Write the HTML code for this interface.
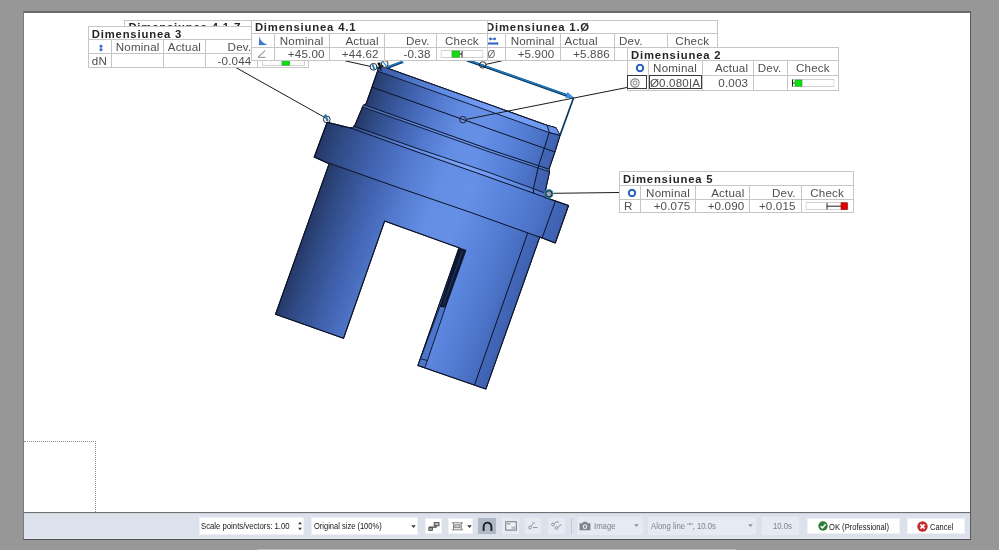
<!DOCTYPE html>
<html><head><meta charset="utf-8"><title>Report</title>
<style>
html,body{margin:0;padding:0}
body{width:999px;height:550px;overflow:hidden;background:#979797;position:relative;font-family:"Liberation Sans",sans-serif}
#win{position:absolute;left:23px;top:11px;width:946px;height:526px;background:#fff;border:1px solid #5a5a5a;border-top:2px solid #6b6b6b;border-left-color:#7b7b7b;border-bottom-color:#505050;box-sizing:content-box}
#page{position:absolute;left:0;top:0;width:999px;height:550px;will-change:transform}
.lbl{position:absolute;background:#fff;font-size:11.6px;letter-spacing:.18px;color:#4e4e4e}
.lbl::before{content:'';position:absolute;left:0;top:0;right:0;bottom:0;border-left:1px solid #c6c6c6;border-top:1px solid #c6c6c6}
.cell{position:absolute;box-sizing:border-box;border-right:1px solid #c6c6c6;border-bottom:1px solid #c6c6c6;white-space:nowrap}
.cell .t{position:absolute;top:50%;transform:translateY(-50%);line-height:12px;margin-top:calc(.5px + var(--dy,0px))}
.cell .t.c{left:50%;transform:translate(-50%,-50%)}
.cell .t.b{font-weight:bold;font-size:11.3px;letter-spacing:.82px;color:#262626;margin-top:1.5px}
.ic{display:block}
.sym{font-size:10.5px;color:#6a6a6a;letter-spacing:0}
.bx{position:absolute;border:1.8px solid #3a3a3a;box-sizing:border-box}
#dot{position:absolute;left:24px;top:441px;width:72px;height:71px;border-top:1px dotted #8c8c8c;border-right:1px dotted #8c8c8c;box-sizing:border-box}
#tb{position:absolute;left:24px;top:512px;width:946px;height:27px;background:linear-gradient(#c9ced8 0,#dce1ec 1.5px,#dce1ec 24px,#e6eaf3 26px);border-top:1px solid #707070;box-sizing:border-box;font-size:9px;color:#161616}
#tb .w{position:absolute;top:4px;height:17px;background:#fff;box-sizing:border-box;border:1px solid #eef1f6}
#tb .d{position:absolute;top:4px;height:17px;background:#e6eaf2;box-sizing:border-box;color:#7d828b}
#tb .s{position:absolute;display:inline-block;transform:scaleX(.86);transform-origin:0 50%;white-space:nowrap;top:3.9px;line-height:10px}
#tb .d .s{top:4.8px}
#strip{position:absolute;left:257px;top:549px;width:479px;height:1px;background:#b9bcc2}
</style></head><body>
<div id="win"></div>
<div id="page">
<svg id="part" width="999" height="550" viewBox="0 0 999 550" style="position:absolute;left:0;top:0">
<defs>
<linearGradient id="g" gradientUnits="userSpaceOnUse" x1="327.8" y1="116.6" x2="569.0" y2="202.3">
<stop offset="0.000" stop-color="#253866"/>
<stop offset="0.080" stop-color="#2f4a84"/>
<stop offset="0.225" stop-color="#4163b0"/>
<stop offset="0.365" stop-color="#547bd0"/>
<stop offset="0.500" stop-color="#648ee4"/>
<stop offset="0.625" stop-color="#668fe6"/>
<stop offset="0.750" stop-color="#5a84dc"/>
<stop offset="0.880" stop-color="#4d75ca"/>
<stop offset="0.950" stop-color="#456abc"/>
<stop offset="1.000" stop-color="#4163b2"/>
</linearGradient>
<linearGradient id="gu" gradientUnits="userSpaceOnUse" x1="355.1" y1="126.3" x2="541.6" y2="192.6">
<stop offset="0.000" stop-color="#253866"/>
<stop offset="0.080" stop-color="#2f4a84"/>
<stop offset="0.225" stop-color="#4163b0"/>
<stop offset="0.365" stop-color="#547bd0"/>
<stop offset="0.500" stop-color="#648ee4"/>
<stop offset="0.625" stop-color="#668fe6"/>
<stop offset="0.750" stop-color="#5a84dc"/>
<stop offset="0.880" stop-color="#4d75ca"/>
<stop offset="0.950" stop-color="#456abc"/>
<stop offset="1.000" stop-color="#4163b2"/>
</linearGradient>
<linearGradient id="gl" gradientUnits="userSpaceOnUse" x1="342.9" y1="121.9" x2="553.9" y2="197.0">
<stop offset="0.000" stop-color="#253866"/>
<stop offset="0.080" stop-color="#2f4a84"/>
<stop offset="0.225" stop-color="#4163b0"/>
<stop offset="0.365" stop-color="#547bd0"/>
<stop offset="0.500" stop-color="#648ee4"/>
<stop offset="0.625" stop-color="#668fe6"/>
<stop offset="0.750" stop-color="#5a84dc"/>
<stop offset="0.880" stop-color="#4d75ca"/>
<stop offset="0.950" stop-color="#456abc"/>
<stop offset="1.000" stop-color="#4163b2"/>
</linearGradient>
<linearGradient id="gf" gradientUnits="userSpaceOnUse" x1="350" y1="127" x2="545" y2="195">
<stop offset="0" stop-color="#5a86e4" stop-opacity="0.25"/>
<stop offset="0.3" stop-color="#6c98f4" stop-opacity="0.6"/>
<stop offset="0.6" stop-color="#80aaff" stop-opacity="0.85"/>
<stop offset="0.85" stop-color="#6c98f4" stop-opacity="0.6"/>
<stop offset="1" stop-color="#5f8ae8" stop-opacity="0.5"/>
</linearGradient>
<linearGradient id="gt" gradientUnits="userSpaceOnUse" x1="378" y1="69" x2="556" y2="128">
<stop offset="0" stop-color="#3a5aa2"/>
<stop offset="0.35" stop-color="#5f8ae4"/>
<stop offset="0.7" stop-color="#79a4fb"/>
<stop offset="1" stop-color="#6a94ee"/>
</linearGradient>
</defs>
<!-- body silhouette -->
<path id="body" fill="url(#g)" stroke="#0b1226" stroke-width="1.1" stroke-linejoin="round" d="
M377.6 71.2 Q378.6 65.6 384.5 67.2 L547.4 125.5 L555.9 127.9 L560 135.4 L555.3 150.5 L548.9 169.2 L549.5 171.6 L544.7 193.8 L545.3 197.4
L568.5 205.6 L555.3 242.9 L539.7 237.1 L485.9 388.9 L418 365.4 L459.1 247.8 L384.6 221 L343.5 338.3 L275.6 314.2
L329.2 163.7 L314.2 157.1 L327.2 122.2 L349.5 127.7 Q353.6 128.6 355.2 124.6 L363.2 105.6 L366.2 103.6 L372 87.2 Z"/>
<clipPath id="cb"><path d="M377.6 71.2 Q378.6 65.6 384.5 67.2 L547.4 125.5 L555.9 127.9 L560 135.4 L555.3 150.5 L548.9 169.2 L549.5 171.6 L544.7 193.8 L545.3 197.4 L568.5 205.6 L555.3 242.9 L539.7 237.1 L485.9 388.9 L418 365.4 L459.1 247.8 L384.6 221 L343.5 338.3 L275.6 314.2 L329.2 163.7 L314.2 157.1 L327.2 122.2 L349.5 127.7 Q353.6 128.6 355.2 124.6 L363.2 105.6 L366.2 103.6 L372 87.2 Z"/></clipPath>
<g clip-path="url(#cb)">
<path fill="url(#gu)" d="M340 128 L350.2 127.8 L545.3 197.4 L580 209.7 L580 50 L340 50 Z"/>
<path fill="url(#gl)" d="M250 135 L329.2 163.2 L542.1 238 L575 249.6 L575 400 L250 400 Z"/>
</g>
<path fill="none" stroke="#0b1226" stroke-width="1.1" stroke-linejoin="round" d="M377.6 71.2 Q378.6 65.6 384.5 67.2 L547.4 125.5 L555.9 127.9 L560 135.4 L555.3 150.5 L548.9 169.2 L549.5 171.6 L544.7 193.8 L545.3 197.4 L568.5 205.6 L555.3 242.9 L539.7 237.1 L485.9 388.9 L418 365.4 L459.1 247.8 L384.6 221 L343.5 338.3 L275.6 314.2 L329.2 163.7 L314.2 157.1 L327.2 122.2 L349.5 127.7 Q353.6 128.6 355.2 124.6 L363.2 105.6 L366.2 103.6 L372 87.2 Z"/>

<!-- top face light strip -->
<path fill="url(#gt)" stroke="#0b1226" stroke-width="0.9" stroke-linejoin="round" d="M377.6 71.2 Q378.6 65.6 384.5 67.2 L547.4 125.5 L555.9 127.9 L560 135.4 L549.2 132.6 Z"/>
<!-- right end faces (slightly darker) -->
<path fill="#3b5aa6" fill-opacity="0.22" d="M547.4 125.8 L555.9 127.9 L560 135.4 L555.3 150.5 L548.9 169.2 L549.5 171.6 L544.7 193.8 L533.8 193.2 L533.2 189.6 L538.6 165.6 L544.4 148 L549.2 132.4 Z"/>
<path fill="#6f9af4" fill-opacity="0.55" d="M547.4 125.8 L555.9 127.9 L560 135.4 L549.2 132.4 Z"/>
<path fill="#34509a" fill-opacity="0.12" d="M555.3 201.4 L568.5 205.6 L555.3 242.9 L542.1 238 Z"/>
<path fill="#34509a" fill-opacity="0.1" d="M527.7 233 L539.7 237.1 L485.9 388.9 L474.5 384.9 Z"/>
<!-- fillet light strip between cylinder and flange -->
<path fill="url(#gf)" d="M353 126.5 Q420 150.5 490 173.2 L544 192.8 L545 197 L490 177.4 Q420 153 350.5 128 Z"/>
<path fill="#6c98f2" fill-opacity="0.45" d="M363.6 104.6 L490 149.6 L548.9 169.2 L549.5 171.7 L490 152.1 L362.6 107 Z"/>
<g fill="none" stroke="#0b1226" stroke-width="1">
<!-- L2 -->
<path d="M372 87.2 L500 132.6 L554.4 151.8"/>
<!-- groove double line -->
<path d="M363.6 104.6 L490 149.6 L548.9 169.2"/>
<path d="M362.6 107 L490 152.1 L549.5 171.7" stroke-width="0.9"/>
<!-- fillet lines -->
<path d="M353.5 126 Q420 150 490 172.8 L544 192.6" stroke-width="0.9"/>
<path d="M350 127.8 Q420 153.2 490 177.6 L545.3 197.4"/>
<!-- flange bottom -->
<path d="M329.2 163.2 Q400 188.5 470 212.2 L542.1 238"/>
<!-- right end face edges -->
<path d="M547.4 125.8 L549.2 132.4 L544.4 148 L538.6 165.6 L533.2 189.6 L533.8 193.2"/>
<path d="M549.2 132.4 L560 135.4" stroke-width="0.9"/>
<path d="M555.3 201.4 L542.1 238"/>
<path d="M527.7 233 L474.5 384.9"/>
</g>
<!-- slot inner wall -->
<path fill="#4d75ca" stroke="#0b1226" stroke-width="0.9" stroke-linejoin="round" d="M440 306.3 L445.6 307 L425 367.6 L418 365.4 Z"/>
<path fill="#0d1832" stroke="#0b1226" stroke-width="0.8" stroke-linejoin="round" d="M459.3 247.9 L466 250.3 L445.6 307 L440 306.3 Z"/>
<path fill="none" stroke="#1f3158" stroke-width="1.3" d="M462.4 251 L443.2 305"/>
<path fill="none" stroke="#0b1226" stroke-width="0.9" d="M421 358.8 L427.6 360.6"/>

<!-- leader lines -->
<g fill="none" stroke="#1a1a1a" stroke-width="1">
<path d="M234 66.5 L325 117.6"/>
<path d="M345 60.8 L370.3 66.4"/>
<path d="M501.8 60.9 L486 64.3"/>
<path d="M466.5 119.3 L627.5 87.4"/>
<path d="M553.5 193.3 L619.5 192.5"/>
</g>
<!-- blue measurement line with arrow -->
<path d="M467 60.2 L569 96.2" stroke="#0c3558" stroke-width="2.7" fill="none"/>
<path d="M467.2 59.7 L569.2 95.7" stroke="#1b78bf" stroke-width="1.6" fill="none"/>
<path d="M574 97.9 L565.6 97.6 L567.6 92.6 Z" fill="#3a8ff0" stroke="#1a5a9a" stroke-width="0.5"/>
<path d="M573.6 97.8 L560 135.4" stroke="#0d3a5c" stroke-width="1.7" fill="none"/>
<!-- small blue angle line near 4.1 -->
<path d="M387.7 67.5 L402 62.1" stroke="#0c3558" stroke-width="2.6" fill="none"/>
<path d="M387.7 67 L402 61.6 L403.2 63.4" stroke="#1b78bf" stroke-width="1.6" fill="none"/>
<!-- markers -->
<g fill="none" stroke="#1a1a1a" stroke-width="0.9">
<circle cx="326.8" cy="119.4" r="3.4"/>
<circle cx="373.5" cy="66.8" r="3.4"/>
<circle cx="384.7" cy="64" r="3.4" fill="#fff"/>
<circle cx="482.7" cy="64.9" r="3.2"/>
<circle cx="462.9" cy="119.7" r="3.3"/>
</g>
<path d="M325 114.5 L327.6 120.8" stroke="#1b78bf" stroke-width="2.2" fill="none"/>
<path d="M372.3 64.2 L374.6 69.8" stroke="#1b78bf" stroke-width="1.8" fill="none"/><path d="M383 61.6 L386.8 66.6" stroke="#3a9fe6" stroke-width="1.5" fill="none"/><path d="M378 62.8 L381.2 70.5 M377.5 68.5 L383.2 65.4 M379.5 62.5 L380.2 66" stroke="#0d141c" stroke-width="1.5" fill="none"/><path d="M376.5 66 L378.5 70" stroke="#11517f" stroke-width="1.4" fill="none"/>
<circle cx="548.9" cy="193.8" r="4.1" fill="#8c9aa6" stroke="#2aa2e0" stroke-width="1.2"/>
<circle cx="548.9" cy="193.8" r="3.1" fill="none" stroke="#1a242c" stroke-width="1.1"/>
<circle cx="548.9" cy="193.8" r="0.9" fill="#c0ccd4"/>
</svg>

<div class='lbl' style='left:124.4px;top:20.3px;width:236.1px;height:41.2px;z-index:1'>
<div class='cell' style='left:0;top:0;width:236.1px;height:14.2px'><span class='t b' style='left:4px;margin-top:0.30000000000000004px'>Dimensiunea 4.1.Z</span></div>
<div class='cell ' style='left:0.0px;top:14.2px;width:26.099999999999994px;height:13.5px;'><span class='t c'></span></div>
<div class='cell ' style='left:26.099999999999994px;top:14.2px;width:54.0px;height:13.5px;'><span class='t c'></span></div>
<div class='cell ' style='left:80.1px;top:14.2px;width:54.0px;height:13.5px;'><span class='t c'></span></div>
<div class='cell ' style='left:134.1px;top:14.2px;width:52.0px;height:13.5px;'><span class='t c'></span></div>
<div class='cell ' style='left:186.1px;top:14.2px;width:50.0px;height:13.5px;'><span class='t c'></span></div>
<div class='cell ' style='left:0.0px;top:27.7px;width:26.099999999999994px;height:13.5px;'><span class='t c'></span></div>
<div class='cell ' style='left:26.099999999999994px;top:27.7px;width:54.0px;height:13.5px;'><span class='t c'></span></div>
<div class='cell ' style='left:80.1px;top:27.7px;width:54.0px;height:13.5px;'><span class='t c'></span></div>
<div class='cell ' style='left:134.1px;top:27.7px;width:52.0px;height:13.5px;'><span class='t c'></span></div>
<div class='cell ' style='left:186.1px;top:27.7px;width:50.0px;height:13.5px;'><span class='t c'></span></div>
</div>
<div class='lbl' style='left:87.75px;top:26.1px;width:221.5px;height:41.9px;z-index:2'>
<div class='cell' style='left:0;top:0;width:221.5px;height:13.799999999999997px'><span class='t b' style='left:4px;margin-top:1.2px'>Dimensiunea 3</span></div>
<div class='cell ' style='left:0.0px;top:13.799999999999997px;width:24.349999999999994px;height:14.300000000000004px;'><span class='t c'><svg class='ic' style='position:relative;left:2px;top:0.5px' width='5' height='8.4' viewBox='0 0 8 12'><path d='M4 0 L7.6 4 H5.2 V8 H7.6 L4 12 L0.4 8 H2.8 V4 H0.4 Z' fill='#2f6fcf'/></svg></span></div>
<div class='cell ' style='left:24.349999999999994px;top:13.799999999999997px;width:52.150000000000006px;height:14.300000000000004px;'><span class='t c'>Nominal</span></div>
<div class='cell ' style='left:76.5px;top:13.799999999999997px;width:41.25px;height:14.300000000000004px;'><span class='t c'>Actual</span></div>
<div class='cell ' style='left:117.75px;top:13.799999999999997px;width:52.0px;height:14.300000000000004px;'><span class='t' style='right:5.2px'>Dev.</span></div>
<div class='cell ' style='left:169.75px;top:13.799999999999997px;width:51.75px;height:14.300000000000004px;'><span class='t c'>Check</span></div>
<div class='cell ' style='left:0.0px;top:28.1px;width:24.349999999999994px;height:13.799999999999997px;'><span class='t' style='left:4px'>dN</span></div>
<div class='cell ' style='left:24.349999999999994px;top:28.1px;width:52.150000000000006px;height:13.799999999999997px;'><span class='t c'></span></div>
<div class='cell ' style='left:76.5px;top:28.1px;width:41.25px;height:13.799999999999997px;'><span class='t c'></span></div>
<div class='cell ' style='left:117.75px;top:28.1px;width:52.0px;height:13.799999999999997px;'><span class='t' style='right:5px'>-0.044</span></div>
<div class='cell ' style='left:169.75px;top:28.1px;width:51.75px;height:13.799999999999997px;'><span class='t c'><span style='position:absolute;left:-21px;top:-3.5px'><svg class='ic' width='43' height='8' viewBox='0 0 43 8'><rect x='0.5' y='0.5' width='42' height='7' fill='#fff' stroke='#d0d0d0'/><rect x='20' y='1' width='7.5' height='6.2' fill='#10e010' stroke='#1a9a1a' stroke-width='0.6'/></svg></span></span></div>
</div>
<div class='lbl' style='left:482.5px;top:19.9px;width:235.5px;height:41.1px;z-index:3'>
<div class='cell' style='left:0;top:0;width:235.5px;height:14.100000000000001px'><span class='t b' style='left:3.5px;margin-top:0.30000000000000004px'>Dimensiunea 1.Ø</span></div>
<div class='cell ' style='left:0.0px;top:14.100000000000001px;width:23.5px;height:14.299999999999997px;'><span class='t c'><svg class='ic' style='position:relative;left:-0.6px;top:0.3px' width='10.4' height='9' viewBox='0 0 10.4 9'><path d='M0.9 2.3 L2.6 0.7 L4 1.9 H5.6 L7 0.7 L8.6 2.3 L7 3.9 L5.6 2.9 H4 L2.6 3.9 Z' fill='#2b62c4'/><path d='M0 6 H9.4 L10.4 5.2 V9 L9.4 8.1 H0 Z' fill='#2b62c4'/></svg></span></div>
<div class='cell ' style='left:23.5px;top:14.100000000000001px;width:54.5px;height:14.299999999999997px;'><span class='t' style='left:4.7px'>Nominal</span></div>
<div class='cell ' style='left:78.0px;top:14.100000000000001px;width:54.5px;height:14.299999999999997px;'><span class='t' style='left:4px'>Actual</span></div>
<div class='cell ' style='left:132.5px;top:14.100000000000001px;width:52.5px;height:14.299999999999997px;'><span class='t' style='left:4px'>Dev.</span></div>
<div class='cell ' style='left:185.0px;top:14.100000000000001px;width:50.5px;height:14.299999999999997px;'><span class='t c'>Check</span></div>
<div class='cell ' style='left:0.0px;top:28.4px;width:23.5px;height:12.700000000000003px;--dy:-0.7px;'><span class='t' style='left:5px'><span class='sym' style='font-size:10px'>Ø</span></span></div>
<div class='cell ' style='left:23.5px;top:28.4px;width:54.5px;height:12.700000000000003px;--dy:-0.7px;'><span class='t' style='right:5px'>+5.900</span></div>
<div class='cell ' style='left:78.0px;top:28.4px;width:54.5px;height:12.700000000000003px;--dy:-0.7px;'><span class='t' style='right:4px'>+5.886</span></div>
<div class='cell ' style='left:132.5px;top:28.4px;width:52.5px;height:12.700000000000003px;--dy:-0.7px;'><span class='t c'></span></div>
<div class='cell ' style='left:185.0px;top:28.4px;width:50.5px;height:12.700000000000003px;--dy:-0.7px;'><span class='t c'></span></div>
</div>
<div class='lbl' style='left:250.9px;top:19.9px;width:237.29999999999998px;height:41.1px;z-index:4'>
<div class='cell' style='left:0;top:0;width:237.29999999999998px;height:14.100000000000001px'><span class='t b' style='left:4px;margin-top:0.30000000000000004px'>Dimensiunea 4.1</span></div>
<div class='cell ' style='left:0.0px;top:14.100000000000001px;width:23.799999999999983px;height:14.299999999999997px;'><span class='t c'><svg class='ic' style='position:relative;left:0.5px;top:-0.5px' width='9' height='9.4' viewBox='0 0 9 9.4'><path d='M0.9 0.2 Q2.2 6.2 8.8 8.4 Q4 9.6 0.2 9 Z' fill='#3f78d2'/></svg></span></div>
<div class='cell ' style='left:23.799999999999983px;top:14.100000000000001px;width:55.05000000000001px;height:14.299999999999997px;'><span class='t c'>Nominal</span></div>
<div class='cell ' style='left:78.85px;top:14.100000000000001px;width:55.0px;height:14.299999999999997px;'><span class='t' style='right:5px'>Actual</span></div>
<div class='cell ' style='left:133.85px;top:14.100000000000001px;width:52.0px;height:14.299999999999997px;'><span class='t' style='right:6px'>Dev.</span></div>
<div class='cell ' style='left:185.85px;top:14.100000000000001px;width:51.44999999999999px;height:14.299999999999997px;'><span class='t c'>Check</span></div>
<div class='cell ' style='left:0.0px;top:28.4px;width:23.799999999999983px;height:12.700000000000003px;--dy:-0.7px;'><span class='t' style='left:5.5px'><svg class='ic' style='position:relative;left:0.5px;top:-0.3px' width='9' height='8.5' viewBox='0 0 9 8.5'><path d='M8.2 0.7 L1 7.6 H8.4' fill='none' stroke='#6a6a6a' stroke-width='1'/></svg></span></div>
<div class='cell ' style='left:23.799999999999983px;top:28.4px;width:55.05000000000001px;height:12.700000000000003px;--dy:-0.7px;'><span class='t' style='right:4px'>+45.00</span></div>
<div class='cell ' style='left:78.85px;top:28.4px;width:55.0px;height:12.700000000000003px;--dy:-0.7px;'><span class='t' style='right:5px'>+44.62</span></div>
<div class='cell ' style='left:133.85px;top:28.4px;width:52.0px;height:12.700000000000003px;--dy:-0.7px;'><span class='t' style='right:5px'>-0.38</span></div>
<div class='cell ' style='left:185.85px;top:28.4px;width:51.44999999999999px;height:12.700000000000003px;--dy:-0.7px;'><span class='t c'><svg class='ic' width='43' height='8' viewBox='0 0 43 8'><rect x='0.5' y='0.5' width='42' height='7' fill='#fff' stroke='#d0d0d0'/><rect x='11.5' y='1' width='7.5' height='6.2' fill='#10e010' stroke='#1a9a1a' stroke-width='0.6'/><path d='M19 4 H21.5 M21.5 1 V7.5' stroke='#222' stroke-width='1' fill='none'/></svg></span></div>
</div>
<div class='lbl' style='left:627.0px;top:46.5px;width:212.25px;height:44.0px;z-index:5'>
<div class='cell' style='left:0;top:0;width:212.25px;height:14.5px'><span class='t b' style='left:4px;margin-top:1.75px'>Dimensiunea 2</span></div>
<div class='cell ' style='left:0.0px;top:14.5px;width:21.5px;height:14.5px;'><span class='t c'><svg class='ic' style='position:relative;left:2.9px' width='9' height='9' viewBox='0 0 9 9'><circle cx='4.5' cy='4.5' r='3.2' fill='none' stroke='#2b5fbd' stroke-width='2'/></svg></span></div>
<div class='cell ' style='left:21.5px;top:14.5px;width:54.0px;height:14.5px;'><span class='t c'>Nominal</span></div>
<div class='cell ' style='left:75.5px;top:14.5px;width:51.25px;height:14.5px;'><span class='t' style='right:4.5px'>Actual</span></div>
<div class='cell ' style='left:126.75px;top:14.5px;width:33.75px;height:14.5px;'><span class='t' style='left:4px'>Dev.</span></div>
<div class='cell ' style='left:160.5px;top:14.5px;width:51.75px;height:14.5px;'><span class='t c'>Check</span></div>
<div class='cell ' style='left:0.0px;top:29.0px;width:21.5px;height:15.0px;'><span class='bx' style='left:0.4px;top:-0.7px;width:20px;height:14.4px'></span><span class='t c'><svg class='ic' style='position:relative;left:-2.6px' width='10.5' height='10.5' viewBox='0 0 10 10'><circle cx='5' cy='5' r='4' fill='none' stroke='#8a8a8a' stroke-width='1.2'/><circle cx='5' cy='5' r='1.8' fill='none' stroke='#9a9a9a' stroke-width='1.1'/></svg></span></div>
<div class='cell ' style='left:21.5px;top:29.0px;width:54.0px;height:15.0px;'><span class='bx' style='left:0.4px;top:-0.7px;width:53px;height:14.4px'></span><span class='t c'>Ø0.080|A</span></div>
<div class='cell ' style='left:75.5px;top:29.0px;width:51.25px;height:15.0px;'><span class='t' style='right:4.5px'>0.003</span></div>
<div class='cell ' style='left:126.75px;top:29.0px;width:33.75px;height:15.0px;'><span class='t c'></span></div>
<div class='cell ' style='left:160.5px;top:29.0px;width:51.75px;height:15.0px;'><span class='t c'><svg class='ic' width='43' height='8' viewBox='0 0 43 8'><rect x='0.5' y='0.5' width='42' height='7' fill='#fff' stroke='#d0d0d0'/><path d='M1 0.5 V7.5 M1 4 H3.5' stroke='#222' stroke-width='1' fill='none'/><rect x='3.5' y='1' width='7' height='6.2' fill='#10e010' stroke='#1a9a1a' stroke-width='0.6'/></svg></span></div>
</div>
<div class='lbl' style='left:619.0px;top:170.75px;width:234.5px;height:42.25px;z-index:5'>
<div class='cell' style='left:0;top:0;width:234.5px;height:15.25px'><span class='t b' style='left:4px;margin-top:1.6px'>Dimensiunea 5</span></div>
<div class='cell ' style='left:0.0px;top:15.25px;width:22.0px;height:13.800000000000011px;'><span class='t c'><svg class='ic' style='position:relative;left:2px' width='9' height='9' viewBox='0 0 9 9'><circle cx='4.5' cy='4.5' r='3.2' fill='none' stroke='#2b5fbd' stroke-width='2'/></svg></span></div>
<div class='cell ' style='left:22.0px;top:15.25px;width:55.0px;height:13.800000000000011px;'><span class='t c'>Nominal</span></div>
<div class='cell ' style='left:77.0px;top:15.25px;width:54.0px;height:13.800000000000011px;'><span class='t' style='right:4.5px'>Actual</span></div>
<div class='cell ' style='left:131.0px;top:15.25px;width:51.75px;height:13.800000000000011px;'><span class='t' style='right:5px'>Dev.</span></div>
<div class='cell ' style='left:182.75px;top:15.25px;width:51.75px;height:13.800000000000011px;'><span class='t c'>Check</span></div>
<div class='cell ' style='left:0.0px;top:29.05000000000001px;width:22.0px;height:13.199999999999989px;'><span class='t' style='left:5px'>R</span></div>
<div class='cell ' style='left:22.0px;top:29.05000000000001px;width:55.0px;height:13.199999999999989px;'><span class='t' style='right:4.5px'>+0.075</span></div>
<div class='cell ' style='left:77.0px;top:29.05000000000001px;width:54.0px;height:13.199999999999989px;'><span class='t' style='right:4.5px'>+0.090</span></div>
<div class='cell ' style='left:131.0px;top:29.05000000000001px;width:51.75px;height:13.199999999999989px;'><span class='t' style='right:5px'>+0.015</span></div>
<div class='cell ' style='left:182.75px;top:29.05000000000001px;width:51.75px;height:13.199999999999989px;'><span class='t c'><svg class='ic' width='43' height='8' viewBox='0 0 43 8'><rect x='0.5' y='0.5' width='42' height='7' fill='#fff' stroke='#d0d0d0'/><path d='M21.5 1 V7.5 M21.5 4.2 H36' stroke='#222' stroke-width='1' fill='none'/><rect x='35.5' y='0.8' width='6.5' height='6.8' fill='#e00000' stroke='#900' stroke-width='0.6'/></svg></span></div>
</div>
<div id="dot"></div>
<div id="tb">
<div class="w" style="left:175px;width:105px;top:3.5px;height:18px"><span class="s" style="left:1.2px">Scale points/vectors: 1.00</span>
<svg style="position:absolute;left:96.5px;top:3.5px" width="6" height="10" viewBox="0 0 6 10"><path d="M3 0.8 L4.9 3.2 H1.1 Z M3 9.2 L4.9 6.8 H1.1 Z" fill="#333"/></svg></div>
<div class="w" style="left:287px;width:107px;top:3.5px;height:18px"><span class="s" style="left:1.5px;transform:scaleX(.835)">Original size (100%)</span>
<svg style="position:absolute;left:98.5px;top:7px" width="5" height="3" viewBox="0 0 5 3"><path d="M0.3 0.3 H4.7 L2.5 2.9 Z" fill="#333"/></svg></div>
<div class="w" style="left:400.5px;width:17px;top:4.5px;height:16.5px"><svg style="position:absolute;left:2.5px;top:3.5px" width="12" height="9" viewBox="0 0 12 9"><path d="M1 5.2 H8 V3" stroke="#444" stroke-width="1.3" fill="none"/><rect x="6.2" y="0.6" width="4.8" height="3.2" fill="#bbb" stroke="#444" stroke-width="0.9"/><rect x="0.8" y="5.6" width="3.6" height="2.8" fill="#999" stroke="#444" stroke-width="0.8"/></svg></div>
<div class="w" style="left:423.5px;width:25px;top:4.5px;height:16.5px"><svg style="position:absolute;left:2.5px;top:3.5px" width="13" height="9" viewBox="0 0 13 9"><path d="M0.8 0.8 H12 M0.8 7.8 H12 M2.5 0.8 V7.8 M10.3 0.8 V7.8" stroke="#777" stroke-width="0.9" fill="none"/><rect x="3.8" y="2.8" width="5.2" height="3" fill="#ccc" stroke="#666" stroke-width="0.7"/></svg>
<svg style="position:absolute;left:18px;top:6.5px" width="5" height="3" viewBox="0 0 5 3"><path d="M0.2 0.2 H4.8 L2.5 2.9 Z" fill="#333"/></svg></div>
<div class="d" style="left:454px;width:18px;top:4.5px;height:16.5px;background:#b2b9c6"><svg style="position:absolute;left:3.5px;top:3px" width="11" height="11" viewBox="0 0 11 11"><path d="M1.6 10 V6 C1.6 0.2 9.4 0.2 9.4 6 V10" stroke="#1e2024" stroke-width="1.9" fill="none"/></svg></div>
<div class="d" style="left:478px;width:16.6px;top:4.5px;height:16.5px"><svg style="position:absolute;left:2.5px;top:3.5px" width="12" height="10" viewBox="0 0 12 10"><rect x="0.7" y="0.7" width="10.6" height="8.4" fill="#eef0f4" stroke="#7d828a" stroke-width="1.1"/><rect x="1.8" y="2" width="3.6" height="1.6" fill="#a8adb5"/><rect x="6.5" y="5.5" width="3.8" height="2.4" fill="#b8bcc4"/></svg></div>
<div class="d" style="left:500.6px;width:16.6px;top:4.5px;height:16.5px"><svg style="position:absolute;left:3.5px;top:4px" width="10" height="8" viewBox="0 0 10 8"><circle cx="2" cy="5.5" r="1.4" fill="none" stroke="#8a8f98" stroke-width="0.9"/><path d="M3 4.5 L5 2 M5 5.5 H9.5 M4.5 1 H7" stroke="#8a8f98" stroke-width="0.9" fill="none"/></svg></div>
<div class="d" style="left:523.7px;width:17px;top:4.5px;height:16.5px"><svg style="position:absolute;left:3px;top:3.5px" width="11" height="9" viewBox="0 0 11 9"><circle cx="2" cy="3.5" r="1.4" fill="none" stroke="#8a8f98" stroke-width="0.9"/><circle cx="5.5" cy="7" r="1.4" fill="none" stroke="#8a8f98" stroke-width="0.9"/><path d="M3.2 2.5 L5 1 H8 M7 6.5 L9 4 H10.5" stroke="#8a8f98" stroke-width="0.9" fill="none"/></svg></div>
<div style="position:absolute;left:546.5px;top:5px;width:1px;height:16px;background:#c3c8d2"></div>
<div class="d" style="left:552.6px;width:66px;top:3.5px;height:18px"><svg style="position:absolute;left:2px;top:4.5px" width="12" height="9.8" viewBox="0 0 11 9"><path d="M0.5 2 H3 L4 0.6 H7 L8 2 H10.5 V8.5 H0.5 Z" fill="#7f848c"/><circle cx="5.5" cy="5.2" r="2.1" fill="#e6eaf2"/><circle cx="5.5" cy="5.2" r="1.1" fill="#7f848c"/></svg><span class="s" style="left:17.5px">Image</span>
<svg style="position:absolute;left:57.5px;top:7.5px" width="5" height="3" viewBox="0 0 5 3"><path d="M0.2 0.2 H4.8 L2.5 2.9 Z" fill="#8a8f98"/></svg></div>
<div class="d" style="left:623.7px;width:108.3px;top:3.5px;height:18px"><span class="s" style="left:3px">Along line "", 10.0s</span>
<svg style="position:absolute;left:100.5px;top:7.5px" width="5" height="3" viewBox="0 0 5 3"><path d="M0.2 0.2 H4.8 L2.5 2.9 Z" fill="#8a8f98"/></svg></div>
<div class="d" style="left:738.3px;width:36.5px;top:3.5px;height:18px"><span class="s" style="left:10.5px">10.0s</span></div>
<div class="w" style="left:783px;width:93px;top:5px;height:16px"><svg style="position:absolute;left:9.5px;top:2.3px" width="10" height="10" viewBox="0 0 10 10"><circle cx="5" cy="5" r="4.7" fill="#2f7d32"/><path d="M2.6 5.2 L4.4 7 L7.6 3.2" stroke="#fff" stroke-width="1.5" fill="none"/></svg><span class="s" style="left:20.8px;top:2.5px;transform:scaleX(.845)">OK (Professional)</span></div>
<div class="w" style="left:883px;width:57.5px;top:5px;height:16px"><svg style="position:absolute;left:9px;top:2px" width="11" height="11" viewBox="0 0 11 11"><circle cx="5.5" cy="5.5" r="5.2" fill="#c62a2f"/><path d="M3.4 3.4 L7.6 7.6 M7.6 3.4 L3.4 7.6" stroke="#fff" stroke-width="1.6" fill="none"/></svg><span class="s" style="left:21.5px;top:2.5px;transform:scaleX(.83)">Cancel</span></div>
</div>

<div id="strip"></div>
</div>
</body></html>
